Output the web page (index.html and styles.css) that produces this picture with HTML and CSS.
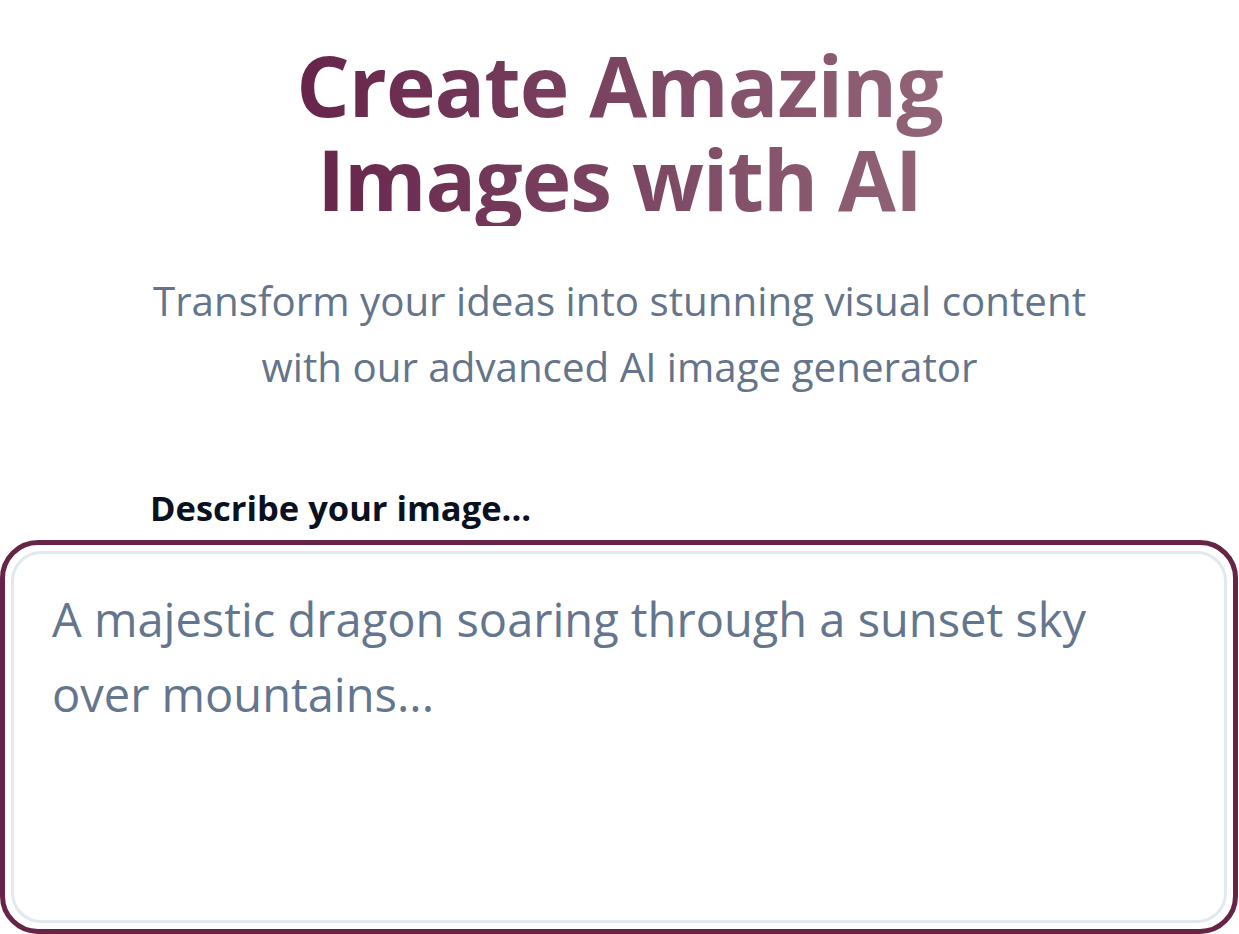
FILE: index.html
```html
<!DOCTYPE html>
<html lang="en">
<head>
<meta charset="utf-8">
<title>Create Amazing Images with AI</title>
<link rel="stylesheet" href="styles.css">
</head>
<body>
<main class="page">
  <header class="hero">
    <h1 class="title">Create Amazing<br>Images with AI</h1>
    <p class="subtitle">Transform your ideas into stunning visual content<br>with our advanced AI image generator</p>
  </header>
  <section class="prompt">
    <label class="label" for="prompt">Describe your image...</label>
    <div class="ring">
      <textarea id="prompt" class="input" placeholder="A majestic dragon soaring through a sunset sky over mountains..."></textarea>
    </div>
  </section>
</main>
</body>
</html>
```

FILE: styles.css
```css
html, body {
  margin: 0;
  padding: 0;
  background: #ffffff;
}
body {
  font-family: "Open Sans", "Noto Sans", sans-serif;
  overflow: hidden;
}
.page {
  display: flex;
  flex-direction: column;
}
.hero {
  text-align: center;
  display: flex;
  flex-direction: column;
  align-items: center;
}
.title {
  margin: 38px 0 0;
  font-size: 84px;
  line-height: 94px;
  font-weight: 700;
  letter-spacing: -1px;
  background: linear-gradient(90deg, #66244a 0%, #7d4864 55%, #936578 100%);
  -webkit-background-clip: text;
  background-clip: text;
  color: transparent;
}
.subtitle {
  margin: 42px 0 0;
  font-size: 40.3px;
  line-height: 66px;
  color: #64748b;
}
.prompt {
  margin-top: 87px;
  display: flex;
  flex-direction: column;
}
.label {
  margin-left: 150px;
  font-size: 34.5px;
  line-height: 42px;
  font-weight: 700;
  color: #0b1120;
  margin-bottom: 11px;
}
.ring {
  border: 5px solid #662446;
  border-radius: 38px;
  padding: 6px;
  margin-right: 1px;
}
.input {
  display: block;
  width: 100%;
  box-sizing: border-box;
  height: 372px;
  border: 3px solid #e2e8f0;
  border-radius: 30px;
  padding: 28px 70px 28px 38px;
  font-family: inherit;
  font-size: 47px;
  line-height: 75px;
  resize: none;
  outline: none;
  background: #ffffff;
}
.input::placeholder {
  color: #64768e;
  opacity: 1;
}
```
